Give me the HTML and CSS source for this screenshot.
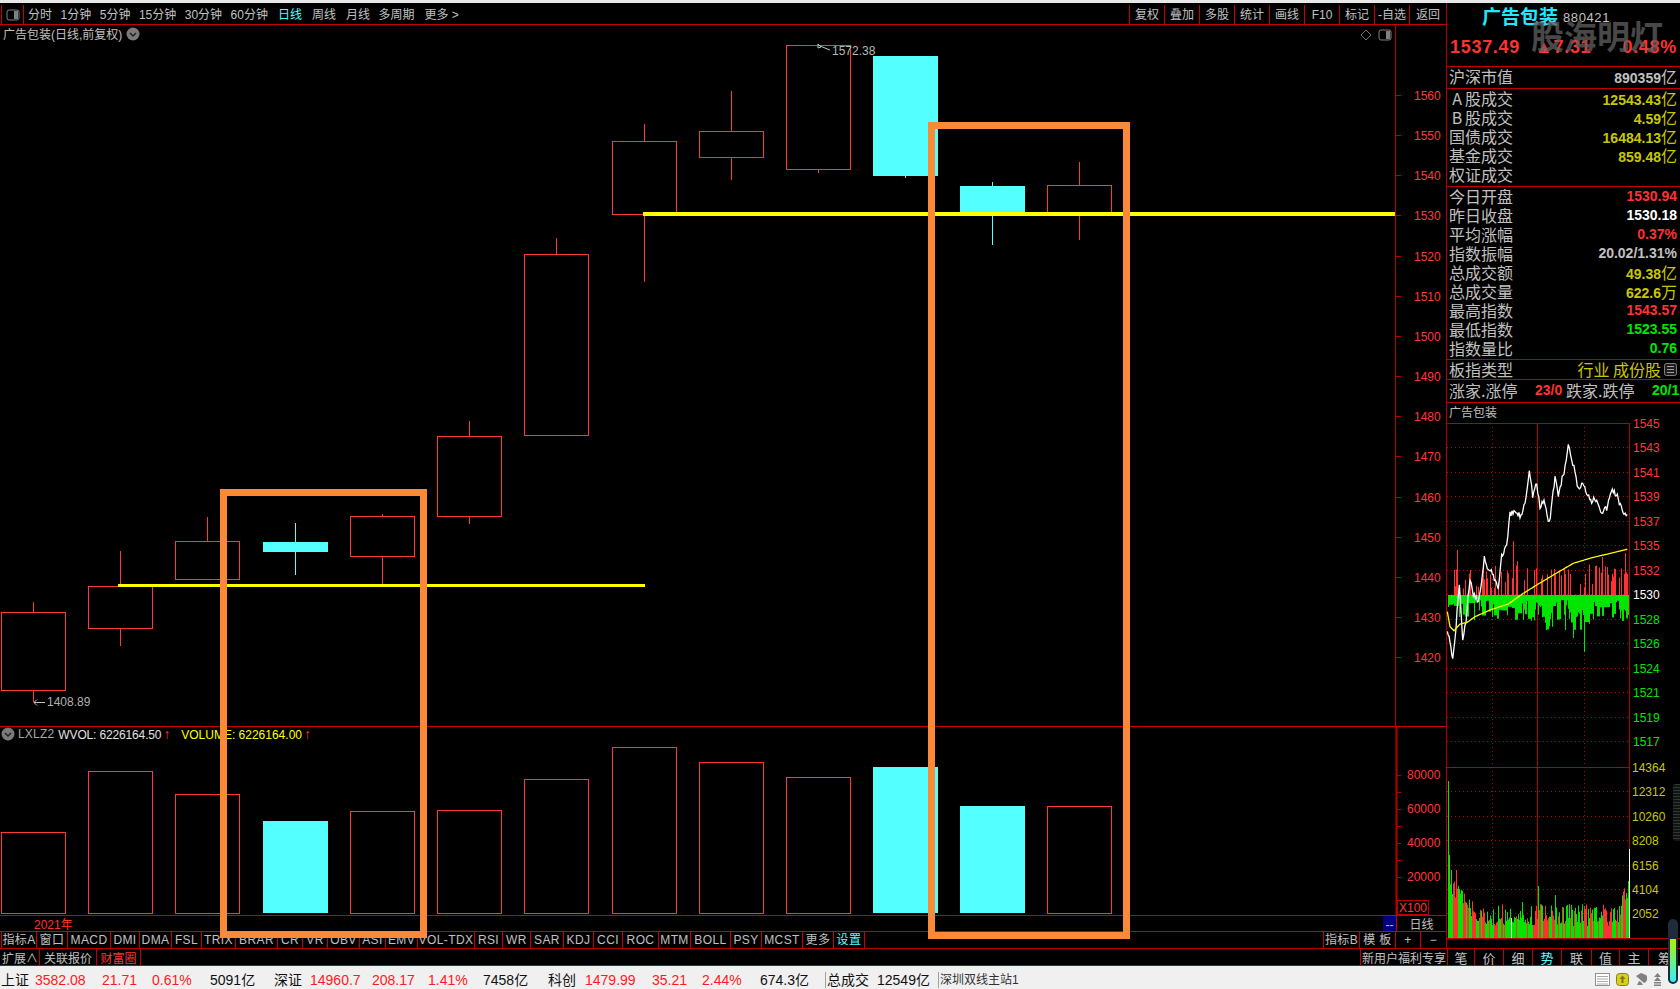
FILE: index.html

```html
<!DOCTYPE html>
<html>
<head>
<meta charset="utf-8">
<meta name="viewport" content="width=device-width, initial-scale=1">
<title>广告包装</title>
<link rel="stylesheet" href="styles.css">
</head>
<body>

<div class="top-strip"></div>

<div class="workspace">

  <div class="chart-col">

    <div class="toolbar">
      <div class="panel-toggle">
        <svg width="14" height="12" viewBox="0 0 14 12"><rect x="1" y="1" width="12" height="10" rx="2" class="toggle-frame"/><rect x="8" y="2" width="4" height="8" class="toggle-fill"/></svg>
      </div>
      <div class="periods">
        <span>分时</span><span>1分钟</span><span>5分钟</span><span>15分钟</span><span>30分钟</span><span>60分钟</span><span class="active wide">日线</span><span class="wide">周线</span><span class="wide">月线</span><span>多周期</span><span class="wide">更多 &gt;</span>
      </div>
      <div class="tools">
        <span>复权</span><span>叠加</span><span>多股</span><span>统计</span><span>画线</span><span>F10</span><span>标记</span><span>-自选</span><span>返回</span>
      </div>
    </div>

    <div class="panes">
      <svg id="pricePane" class="pane" width="1446" height="701" viewBox="0 25 1446 701"></svg>
      <svg id="volumePane" class="pane" width="1446" height="189" viewBox="0 726 1446 189"></svg>

      <div class="pane-title">
        广告包装(日线,前复权)
        <svg class="chevron" width="14" height="14" viewBox="0 0 14 14"><circle cx="7" cy="7" r="6.5" class="chevron-bg"/><path d="M4 6l3 3 3-3" class="chevron-mark"/></svg>
      </div>

      <div class="pane-icons">
        <svg width="12" height="12" viewBox="0 0 12 12"><path d="M6 1l5 5-5 5-5-5z" class="diamond"/></svg>
        <svg width="14" height="12" viewBox="0 0 14 12"><rect x="1" y="1" width="12" height="10" rx="2" class="toggle-frame"/><rect x="8" y="2" width="4" height="8" class="toggle-fill"/></svg>
      </div>

      <div class="legend">
        <svg class="chevron" width="14" height="14" viewBox="0 0 14 14"><circle cx="7" cy="7" r="6.5" class="chevron-bg"/><path d="M4 6l3 3 3-3" class="chevron-mark"/></svg>
        <span class="legend-name">LXLZ2</span>
        <span class="legend-wvol">WVOL: 6226164.50<b>↑</b></span>
        <span class="legend-vol">VOLUME: 6226164.00<b>↑</b></span>
      </div>

      <div class="mark mark-left"></div>
      <div class="mark mark-right"></div>
    </div>

    <div class="date-row">
      <span class="year">2021年</span>
      <span class="nav-cell">--</span>
      <span class="period-cell">日线</span>
    </div>

    <div class="index-row">
      <div class="index-tabs">
        <span>指标A</span><span>窗口</span><span>MACD</span><span>DMI</span><span>DMA</span><span>FSL</span><span>TRIX</span><span>BRAR</span><span>CR</span><span>VR</span><span>OBV</span><span>ASI</span><span>EMV</span><span>VOL-TDX</span><span>RSI</span><span>WR</span><span>SAR</span><span>KDJ</span><span>CCI</span><span>ROC</span><span>MTM</span><span>BOLL</span><span>PSY</span><span>MCST</span><span>更多</span><span class="active">设置</span>
      </div>
      <div class="index-extra">
        <span>指标B</span><span>模 板</span><span>+</span><span>−</span>
      </div>
    </div>
  </div>

  <div class="side-col">
    <div class="quote-head">
      <div class="quote-name"><span class="name-cn">广告包装</span><span class="name-code">880421</span></div>
      <div class="quote-price"><span>1537.49</span><span class="price-change">▲7.31</span><span class="price-pct">0.48%</span></div>
      <div class="watermark">股海明灯</div>
    </div>

    <div class="group g-market">
      <div class="row"><span>沪深市值</span><span class="gray">890359<i>亿</i></span></div>
    </div>
    <div class="group g-deal">
      <div class="row"><span><em>A</em>股成交</span><span class="yellow">12543.43<i>亿</i></span></div>
      <div class="row"><span><em>B</em>股成交</span><span class="yellow">4.59<i>亿</i></span></div>
      <div class="row"><span>国债成交</span><span class="yellow">16484.13<i>亿</i></span></div>
      <div class="row"><span>基金成交</span><span class="yellow">859.48<i>亿</i></span></div>
      <div class="row"><span>权证成交</span></div>
    </div>
    <div class="group g-index">
      <div class="row"><span>今日开盘</span><span class="red">1530.94</span></div>
      <div class="row"><span>昨日收盘</span><span class="white">1530.18</span></div>
      <div class="row"><span>平均涨幅</span><span class="red">0.37%</span></div>
      <div class="row"><span>指数振幅</span><span class="gray">20.02/1.31%</span></div>
      <div class="row"><span>总成交额</span><span class="yellow">49.38<i>亿</i></span></div>
      <div class="row"><span>总成交量</span><span class="yellow">622.6<i>万</i></span></div>
      <div class="row"><span>最高指数</span><span class="red">1543.57</span></div>
      <div class="row"><span>最低指数</span><span class="green">1523.55</span></div>
      <div class="row"><span>指数量比</span><span class="green">0.76</span></div>
    </div>
    <div class="group g-type">
      <div class="row">
        <span>板指类型</span>
        <span class="sector">行业 成份股
          <svg width="13" height="13" viewBox="0 0 13 13"><rect x=".5" y=".5" width="12" height="12" rx="2" class="grid-icon"/><path d="M3 3.500h7M3 6.500h7M3 9.500h7" class="grid-lines"/></svg>
        </span>
      </div>
    </div>
    <div class="group g-limit">
      <div class="limit-grid">
        <span>涨家.涨停</span><b class="red">23/0</b><span>跌家.跌停</span><b class="green">20/1</b>
      </div>
    </div>
    <div class="mini-title">广告包装</div>
    <svg id="miniChart" class="mini" width="233" height="525" viewBox="1447 423 233 525"></svg>

    <div class="side-widget"></div>
  </div>
</div>

<div class="tab-row">
  <div class="tab-left">
    <span>扩展∧</span><span>关联报价</span><span class="hot">财富圈</span>
  </div>
  <div class="tab-right">
    <span class="promo">新用户福利专享</span>
    <span>笔</span><span>价</span><span>细</span><span class="active">势</span><span>联</span><span>值</span><span>主</span><span>筹</span>
  </div>
</div>

<div class="status-bar">
  <div class="status-cells">
    <span>上证</span><span class="up">3582.08</span><span class="up">21.71</span><span class="up">0.61%</span><span>5091亿</span>
    <span>深证</span><span class="up">14960.7</span><span class="up">208.17</span><span class="up">1.41%</span><span>7458亿</span>
    <span>科创</span><span class="up">1479.99</span><span class="up">35.21</span><span class="up">2.44%</span><span>674.3亿</span>
    <span class="cut">总成交</span><span>12549亿</span><span class="cut server">深圳双线主站1</span>
  </div>
  <div class="status-icons">
    <svg width="15" height="13" viewBox="0 0 15 13"><rect x=".5" y=".5" width="14" height="12" class="note-frame"/><path d="M2 3.500h11M2 6h11M2 8.500h11M2 11h11" class="note-lines"/></svg>
    <svg width="13" height="13" viewBox="0 0 13 13"><rect x=".5" y=".5" width="12" height="12" rx="3" class="coin"/><path d="M6.500 2.500l3 3.500h-2v4h-2v-4h-2z" class="coin-mark"/></svg>
    <svg width="12" height="13" viewBox="0 0 12 13"><path d="M1 3l8 7a5 5 0 0 0 2-8L6 0z" class="dish"/><path d="M4 8l-2 4h6l-2-3z" class="dish"/></svg>
    <svg width="9" height="13" viewBox="0 0 9 13"><path d="M4.500 0l3.500 4h-7zM4.500 4l3.500 4h-7zM1 9h7v1.500h-7zM1 11.500h7v1.500h-7z" class="dish"/></svg>
  </div>
</div>

<div class="slider"><div class="slider-fill"></div></div>

<script src="chart.js"></script>
</body>
</html>
```

FILE: styles.css

```css
* {
    box-sizing: border-box;
}

html, body {
    margin: 0;
    padding: 0;
    height: 989px;
    overflow: hidden;
}

body {
    position: relative;
    background-color: black;
    color: #c0c0c0;
    font-family: "Liberation Sans", "Noto Sans CJK SC", sans-serif;
    font-size: 12px;
    display: flex;
    flex-direction: column;
}

.top-strip {
    flex: none;
    height: 3px;
    background: #e8e8e8;
}

.workspace {
    flex: none;
    height: 945px;
    display: flex;
}

/* left part: toolbar, panes, index tabs */
.chart-col {
    width: 1447px;
    border-right: 1px solid #b00000;
    display: flex;
    flex-direction: column;
}

.toolbar {
    flex: none;
    height: 22px;
    border-bottom: 1px solid #c80000;
    display: flex;
    align-items: flex-end;
}

.panel-toggle {
    width: 23px;
    height: 19px;
    margin-left: 1px;
    border-left: 1px solid #c80000;
    border-right: 1px solid #c80000;
    display: flex;
    align-items: center;
    justify-content: center;
}

.toggle-frame {
    fill: none;
    stroke: #808080;
}

.toggle-fill {
    fill: #808080;
}

.periods {
    display: flex;
    gap: 8.500px;
    height: 19px;
    line-height: 21px;
    padding-left: 4px;
    flex: 1;
}

.periods .wide {
    margin-left: 1.500px;
}

.periods .active {
    color: #54ffff;
}

.tools {
    display: flex;
    height: 19px;
    line-height: 21px;
    text-align: center;
}

.tools span {
    width: 35px;
    height: 19px;
    border-left: 1px solid #c80000;
}

.tools span:last-child {
    width: 37px;
}

.panes {
    flex: none;
    position: relative;
    height: 890px;
    display: flex;
    flex-direction: column;
}

.pane {
    display: block;
}

.pane text {
    font-family: "Liberation Sans", sans-serif;
    font-size: 12px;
}

.pane-title {
    position: absolute;
    left: 3px;
    top: 0;
    display: flex;
    align-items: center;
    gap: 4px;
}

.chevron-bg {
    fill: #7a7a7a;
}

.chevron-mark {
    fill: none;
    stroke: #202020;
    stroke-width: 1.500;
}

.pane-icons {
    position: absolute;
    right: 54px;
    top: 4px;
    display: flex;
    gap: 6px;
    align-items: center;
}

.diamond {
    fill: none;
    stroke: #707070;
}

.legend {
    position: absolute;
    left: 1px;
    top: 701px;
    height: 16px;
    line-height: 16px;
    display: flex;
    align-items: center;
}

.legend b {
    color: #ff3232;
    font-size: 14px;
    margin-left: 2px;
}

.legend-name {
    margin-left: 3px;
    color: #a8a8a8;
    letter-spacing: .2px;
}

.legend-wvol {
    margin-left: 4px;
    color: #e0e0e0;
    letter-spacing: -.15px;
}

.legend-vol {
    margin-left: 11px;
    color: #ffff00;
}

/* hand drawn frames lying over the chart */
.mark {
    position: absolute;
    border: 7px solid #fb8a38;
}

.mark-left {
    left: 220px;
    top: 464px;
    width: 207px;
    height: 449px;
}

.mark-right {
    left: 928px;
    top: 97px;
    width: 202px;
    height: 817px;
}

.date-row {
    flex: none;
    height: 16px;
    line-height: 18px;
    border-top: 1px solid #c80000;
    display: flex;
}

.year {
    color: #ff3232;
    margin-left: 34px;
    flex: 1;
    height: 15px;
}

.nav-cell {
    width: 13px;
    height: 15px;
    background: #000080;
    text-align: center;
}

.period-cell {
    width: 50px;
    height: 15px;
    border-left: 1px solid #c80000;
    text-align: center;
}

.index-row {
    flex: none;
    height: 17px;
    border-top: 1px solid #c80000;
    display: flex;
    justify-content: space-between;
    text-align: center;
    letter-spacing: .4px;
}

.index-tabs {
    display: grid;
    grid-template-columns: 35px 31px 43px 29px 32px 30px 34px 42px 25px 25px 32px 26px 32px 57px 28px 28px 33px 30px 29px 36px 32px 40px 31px 41px 31px 32px;
    margin-left: 1px;
}

.index-tabs span {
    height: 16px;
    line-height: 17px;
    border-left: 1px solid #c80000;
    overflow: hidden;
    white-space: nowrap;
}

.index-tabs span:last-child {
    border-right: 1px solid #c80000;
}

.index-tabs .active {
    color: #54ffff;
}

.index-extra {
    display: grid;
    grid-template-columns: 36px 36px 25px 26px;
}

.index-extra span {
    height: 16px;
    line-height: 17px;
    border-left: 1px solid #c80000;
}

/* right part: quote table and minute chart */
.side-col {
    position: relative;
    width: 233px;
    display: flex;
    flex-direction: column;
}

.quote-head {
    position: relative;
    height: 63px;
    padding: 0 3px 0 3px;
}

.quote-name {
    height: 25px;
    display: flex;
    align-items: center;
    padding-left: 32px;
}

.name-cn {
    color: #20e8ff;
    font-size: 19px;
    font-weight: bold;
    font-family: "Noto Sans CJK SC", sans-serif;
}

.name-code {
    margin-left: 5px;
    margin-top: 3px;
    font-size: 13px;
    letter-spacing: .6px;
    color: #c0c0c0;
}

.quote-price {
    display: flex;
    margin-top: 8px;
    color: #ff3232;
    font-size: 18px;
    font-weight: bold;
    letter-spacing: .7px;
    line-height: 22px;
}

.price-change {
    margin-left: 15px;
}

.price-pct {
    margin-left: auto;
}

.watermark {
    position: absolute;
    left: 84px;
    top: 12px;
    color: rgba(96, 96, 96, .75);
    font-family: "Noto Sans CJK SC", sans-serif;
    font-size: 33px;
    font-weight: bold;
    line-height: 40px;
    white-space: nowrap;
}

.group {
    border-top: 1px solid #c00000;
    padding: 0 3px 0 2px;
}

.g-market { height: 22px; }
.g-deal { height: 98px; }
.g-index { height: 173px; }
.g-type { height: 20px; }
.g-limit { height: 23px; padding-top: 1px; }

.row {
    height: 19px;
    line-height: 19px;
    font-size: 16px;
    font-family: "Noto Sans CJK SC", sans-serif;
    display: flex;
    justify-content: space-between;
    white-space: nowrap;
}

.g-type .row {
    height: 18px;
    line-height: 18px;
}

.row em {
    font-style: normal;
    display: inline-block;
    width: 16px;
    text-align: center;
}

.row span + span {
    font-family: "Liberation Sans", sans-serif;
    font-size: 14px;
    font-weight: bold;
}

.row i {
    font-family: "Noto Sans CJK SC", sans-serif;
    font-size: 16px;
    font-style: normal;
    font-weight: normal;
}

.row .sector {
    font-family: "Noto Sans CJK SC", sans-serif;
    font-size: 16px;
    font-weight: normal;
    color: #c8c800;
    display: flex;
    align-items: center;
    gap: 3px;
}

.grid-icon {
    fill: #202020;
    stroke: #808080;
}

.grid-lines {
    stroke: #a0a0a0;
    fill: none;
}

.limit-grid {
    display: grid;
    grid-template-columns: 86px 31px 86px 25px;
    height: 19px;
    line-height: 19px;
    font-size: 16px;
    font-family: "Noto Sans CJK SC", sans-serif;
    white-space: nowrap;
}

.limit-grid b {
    font-family: "Liberation Sans", sans-serif;
    font-size: 14px;
}

.gray { color: #c0c0c0; }
.yellow { color: #c8c800; }
.red { color: #ff3232; }
.white { color: #ffffff; }
.green { color: #00e600; }

.mini-title {
    height: 21px;
    line-height: 21px;
    padding-left: 2px;
    border-top: 1px solid #c00000;
}

.mini {
    display: block;
    overflow: visible;
}

.mini text {
    font-family: "Liberation Sans", sans-serif;
    font-size: 12px;
}

.side-widget {
    position: absolute;
    left: 226px;
    top: 781px;
    width: 8px;
    height: 57px;
    border-radius: 3px 0 0 3px;
    background: repeating-linear-gradient(#2c3a34 0 1px, #141414 1px 3px);
}

.tab-row {
    flex: none;
    height: 18px;
    border-top: 1px solid #c00000;
    border-bottom: 1px solid #c00000;
    display: flex;
    justify-content: space-between;
    text-align: center;
}

.tab-left {
    display: grid;
    grid-template-columns: 39px 57px 44px;
    margin-left: 1px;
}

.tab-left span {
    height: 16px;
    line-height: 20px;
    border-right: 1px solid #c00000;
}

.tab-left .hot {
    color: #ff3232;
}

.tab-right {
    width: 320px;
    display: grid;
    grid-template-columns: 87px 27px 29px 29px 29px 30px 28px 29px 32px;
    font-size: 13px;
}

.tab-right span {
    height: 16px;
    line-height: 20px;
    border-left: 1px solid #c00000;
}

.tab-right .promo {
    font-size: 12px;
    white-space: nowrap;
    overflow: hidden;
}

.tab-right .active {
    color: #54ffff;
}

.status-bar {
    flex: none;
    height: 23px;
    background: #f0f0f0;
    color: #101010;
    font-size: 14px;
    display: flex;
    justify-content: space-between;
    align-items: center;
    padding: 4px 18px 0 0;
}

.status-cells {
    display: grid;
    grid-template-columns: 34px 67px 50px 58px 64px 36px 62px 56px 55px 65px 37px 67px 50px 58px 63px 2px 52px 55px 6px 80px;
    margin-left: 1px;
    line-height: 16px;
    white-space: nowrap;
}

.status-cells .up {
    color: #ff1a1a;
}

.status-cells .cut {
    border-left: 1px solid #a0a0a0;
    padding-left: 1px;
}

.status-cells span:nth-child(16) {
    grid-column: 17;
}

.status-cells .server {
    grid-column: 20;
    color: #303030;
    font-size: 12px;
}

.status-icons {
    display: flex;
    align-items: center;
    gap: 6px;
}

.note-frame {
    fill: #ffffff;
    stroke: #909090;
}

.note-lines {
    stroke: #a8a8a8;
    fill: none;
}

.coin {
    fill: #d8d020;
    stroke: #808020;
}

.coin-mark {
    fill: #807810;
}

.dish {
    fill: #808080;
}

.slider {
    position: absolute;
    left: 1668px;
    top: 919px;
    width: 10px;
    height: 65px;
    padding: 20px 2px 2px 2px;
    border-radius: 5px;
    background: #1f2a3a;
}

.slider-fill {
    height: 100%;
    border-radius: 0 0 3px 3px;
    background: linear-gradient(#b0f000, #30f0ff);
}
```

FILE: chart.js

```js
var NS = "http://www.w3.org/2000/svg";
var RED = "#ff3838";
var CYAN = "#54ffff";
var LINE = "#b80000";

function add(svg, tag, attrs, txt) {
    var el = document.createElementNS(NS, tag);
    for (var k in attrs) el.setAttribute(k, attrs[k]);
    if (txt) el.textContent = txt;
    svg.appendChild(el);
    return el;
}

function line(svg, x1, y1, x2, y2, color, w, dash) {
    var a = { x1: x1, y1: y1, x2: x2, y2: y2, stroke: color, "stroke-width": w || 1 };
    if (dash) a["stroke-dasharray"] = dash;
    add(svg, "line", a);
}

function label(svg, x, y, txt, color) {
    add(svg, "text", { x: x, y: y + 4, fill: color }, txt);
}

// x, body top, body bottom, wick top, wick bottom, falling
var candles = [
    [1, 612, 690, 602, 702, 0],
    [88, 586, 628, 551, 646, 0],
    [175, 541, 579, 517, 580, 0],
    [263, 542, 552, 523, 575, 1],
    [350, 516, 556, 514, 586, 0],
    [437, 436, 516, 421, 524, 0],
    [524, 254, 435, 238, 435, 0],
    [612, 141, 214, 124, 282, 0],
    [699, 131, 157, 91, 180, 0],
    [786, 45, 169, 45, 173, 0],
    [873, 56, 176, 56, 178, 1],
    [960, 186, 212, 182, 245, 1],
    [1047, 185, 212, 162, 240, 0]
];

var volTops = [832, 771, 794, 821, 811, 810, 779, 747, 762, 777, 767, 806, 806];
var volFall = [0, 0, 0, 1, 0, 0, 0, 0, 0, 0, 1, 1, 0];

function drawPrice() {
    var svg = document.getElementById("pricePane");

    candles.forEach(function (c) {
        var mid = c[0] + 32.5;
        var color = c[5] ? CYAN : RED;
        line(svg, mid, c[3], mid, c[1], color);
        line(svg, mid, c[2], mid, c[4], color);
        if (c[5]) {
            add(svg, "rect", { x: c[0], y: c[1], width: 65, height: c[2] - c[1], fill: CYAN });
        } else {
            add(svg, "rect", { x: c[0] + 0.5, y: c[1] + 0.5, width: 64, height: c[2] - c[1], fill: "#000", stroke: RED });
        }
    });

    add(svg, "rect", { x: 118, y: 584, width: 527, height: 3, fill: "#ffff00" });
    add(svg, "rect", { x: 643, y: 212, width: 752, height: 4, fill: "#ffff00" });

    add(svg, "path", { d: "M34 702.500h11M34 702.500l3-3M34 702.500l3 3", stroke: "#c0c0c0", fill: "none" });
    label(svg, 47, 702, "1408.89", "#b0b0b0");
    add(svg, "path", { d: "M818 44l3 3 -3 1zM820 46l10 4", stroke: "#c0c0c0", fill: "none" });
    label(svg, 832, 51, "1572.38", "#b8b8b8");

    // price axis
    line(svg, 1395.5, 24, 1395.5, 726, LINE);
    for (var i = 0; i < 15; i++) {
        var y = Math.round(95 + i * 40.15);
        line(svg, 1396, y + 0.5, 1401, y + 0.5, LINE);
        label(svg, 1414, y + 1, String(1560 - i * 10), RED);
    }
}

function drawVolume() {
    var svg = document.getElementById("volumePane");
    line(svg, 0, 726.5, 1446, 726.5, "#c80000");
    volTops.forEach(function (t, i) {
        var x = candles[i][0];
        if (volFall[i]) {
            add(svg, "rect", { x: x, y: t, width: 65, height: 913 - t, fill: CYAN });
        } else {
            add(svg, "rect", { x: x + 0.5, y: t + 0.5, width: 64, height: 913 - t, fill: "#000", stroke: RED });
        }
    });
    line(svg, 1396.5, 726, 1396.5, 915, LINE, 2);
    var labels = ["80000", "60000", "40000", "20000"];
    for (var i = 0; i < 7; i++) {
        var y = 775 + i * 17;
        line(svg, 1397, y + 0.5, 1401, y + 0.5, LINE);
        if (i % 2 == 0) label(svg, 1407, y, labels[i / 2], RED);
    }
    add(svg, "rect", { x: 1397.5, y: 900.5, width: 31, height: 14, fill: "none", stroke: LINE });
    label(svg, 1399, 908, "X100", RED);
}

// small seeded generator so the minute bars stay the same on every load
var seed = 421;
function rnd() {
    seed = (seed * 9301 + 49297) % 233280;
    return seed / 233280;
}

// points read in crop coordinates: x = 1440 + zx / 3, y = 420 + zy / 3
var pricePts = [[22, 640], [30, 660], [38, 715], [48, 620], [58, 485], [68, 660], [78, 600], [90, 480], [100, 520], [115, 550], [125, 480], [133, 410], [145, 450], [160, 465], [175, 505], [185, 405], [200, 380], [210, 285], [225, 275], [243, 290], [258, 230], [268, 145], [278, 225], [290, 190], [300, 265], [312, 240], [328, 310], [345, 170], [355, 225], [372, 155], [385, 75], [395, 130], [405, 150], [415, 210], [425, 190], [437, 210], [455, 240], [470, 235], [485, 275], [500, 265], [517, 205], [535, 235], [552, 290], [565, 275]];
var avgPts = [[22, 575], [30, 620], [42, 632], [60, 612], [80, 608], [105, 590], [150, 570], [205, 552], [250, 520], [290, 495], [340, 465], [400, 430], [460, 412], [520, 398], [565, 387]];

function sx(z) { return 1440 + z / 3; }
function sy(z) { return 420 + z / 3; }

function curve(pts, noise) {
    var out = [];
    for (var i = 0; i < pts.length - 1; i++) {
        var a = pts[i], b = pts[i + 1];
        var steps = Math.max(1, Math.round((b[0] - a[0]) / 3));
        for (var s = 0; s < steps; s++) {
            var t = s / steps;
            var n = noise ? (rnd() - 0.5) * noise : 0;
            out.push(sx(a[0] + (b[0] - a[0]) * t).toFixed(1) + "," + sy(a[1] + (b[1] - a[1]) * t + n).toFixed(1));
        }
    }
    return out.join(" ");
}

function drawMini() {
    var svg = document.getElementById("miniChart");
    var L = 1447, R = 1629, y, x;
    var prices = [1545, 1543, 1541, 1539, 1537, 1535, 1532, 1530, 1528, 1526, 1524, 1521, 1519, 1517];
    var vols = [14364, 12312, 10260, 8208, 6156, 4104, 2052];
    var dots = "1 3";

    // grid
    prices.forEach(function (p, n) {
        y = Math.round(423 + n * 24.47) + 0.5;
        if (n > 0) line(svg, L, y, R, y, "#c00000", 1, dots);
        var color = p > 1530 ? RED : (p == 1530 ? "#ffffff" : "#00e600");
        label(svg, 1633, y, String(p), color);
    });
    vols.forEach(function (v, n) {
        y = Math.round(767 + n * 24.4) + 0.5;
        if (n > 0) line(svg, L, y, R, y, "#c00000", 1, dots);
        label(svg, 1632, y, String(v), "#c8c800");
    });
    line(svg, 1492.5, 423, 1492.5, 938, "#c00000", 1, dots);
    line(svg, 1584.5, 423, 1584.5, 938, "#c00000", 1, dots);
    line(svg, 1537.5, 423, 1537.5, 938, LINE);
    line(svg, L, 423.5, R, 423.5, LINE);
    line(svg, R + 0.5, 423, R + 0.5, 938, LINE);
    line(svg, L, 767.5, R, 767.5, LINE);
    line(svg, L - 1, 938.5, 1680, 938.5, LINE);

    // up and down bars on the zero line
    var peaksUp = { 1457: 550, 1513: 541, 1517: 561, 1602: 557, 1625: 553 };
    var peaksDown = { 1584: 652, 1573: 638, 1546: 630, 1565: 630 };
    var dn = 12;
    for (x = L + 1; x < R; x++) {
        if (rnd() < 0.6) dn = 4 + rnd() * 22;
        var up = rnd() < 0.4 && x > 1452 ? 6 + rnd() * 26 : 0;
        var tall = x > 1541 && x < 1553 || x > 1570 && x < 1590 ? 10 : 0;
        var bot = peaksDown[x] || 595 + dn + tall;
        var top = peaksUp[x] || 595 - up;
        if (top < 595) line(svg, x + 0.5, top, x + 0.5, 595, "#ff3232");
        line(svg, x + 0.5, 595, x + 0.5, bot, "#00e600");
    }

    // price and average
    add(svg, "polyline", { points: curve(pricePts, 20), fill: "none", stroke: "#ffffff", "stroke-width": 1.3 });
    add(svg, "polyline", { points: curve(avgPts, 0), fill: "none", stroke: "#ffff00", "stroke-width": 1.3 });

    // minute volume
    var peaksVol = { 1448: 781, 1449: 855, 1451: 870, 1456: 870, 1538: 886, 1555: 895, 1584: 906, 1522: 902 };
    var c = "#00e600";
    for (x = L + 1; x < R; x++) {
        var e = x < 1474 ? 938 - 62 + (x - 1448) * 1.3 : (x > 1618 ? 938 - 30 - (x - 1618) * 2.4 : 938 - 28);
        var tip = peaksVol[x] || e + rnd() * 22 - 6;
        if (rnd() < 0.35) c = c == "#00e600" ? "#ff3232" : "#00e600";
        line(svg, x + 0.5, tip, x + 0.5, 938, c);
    }
    line(svg, 1511.5, 918, 1511.5, 938, "#ffffff");
    line(svg, 1629.5, 849, 1629.5, 938, "#ffffff");
}

drawPrice();
drawVolume();
drawMini();
```
